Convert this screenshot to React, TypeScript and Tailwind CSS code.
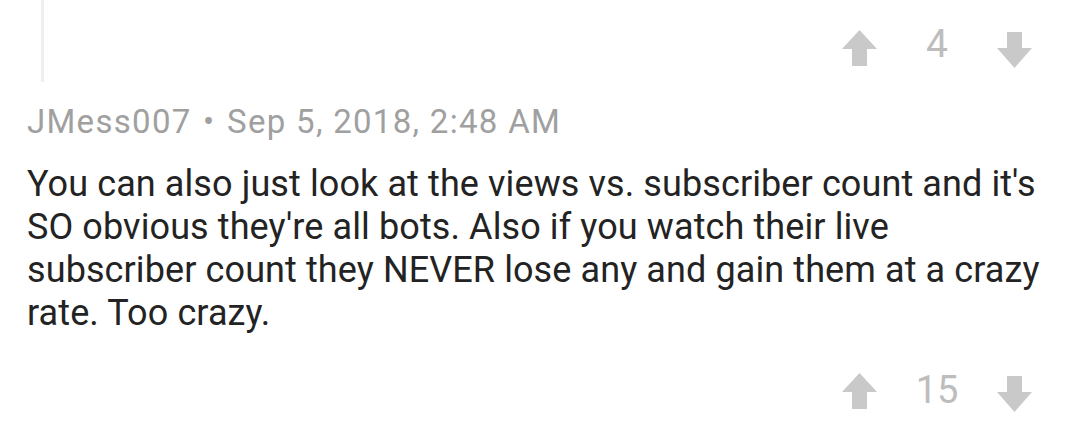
import React from 'react';

function UpArrow() {
  return (
    <svg width="35" height="36" viewBox="0 0 35 36" className="block">
      <polygon points="17.5,0 35,19 25,19 25,36 10,36 10,19 0,19" fill="#c9c9c9" />
    </svg>
  );
}

function DownArrow() {
  return (
    <svg width="35" height="36" viewBox="0 0 35 36" className="block">
      <polygon points="10,0 25,0 25,16 35,16 17.5,36 0,16 10,16" fill="#c9c9c9" />
    </svg>
  );
}

function Votes({ count, low }: { count: number; low?: boolean }) {
  return (
    <div className="flex items-start">
      <UpArrow />
      <div
        className={
          low
            ? 'w-[120px] -mt-[2px] text-center text-[38px] leading-[38px] text-[#bdbdbd]'
            : 'w-[120px] -mt-[5px] text-center text-[39px] leading-[39px] text-[#bdbdbd]'
        }
      >
        {count}
      </div>
      <div className={low ? 'mt-[3px]' : 'mt-[2px]'}>
        <DownArrow />
      </div>
    </div>
  );
}

export default function App() {
  return (
    <div className="w-[1080px] h-[421px] bg-white overflow-hidden font-['Roboto',sans-serif]">
      <div className="flex h-[90px]">
        <div className="ml-[41px] w-[3px] h-[82px] bg-[#efefef]" />
        <div className="ml-auto mr-[48px] pt-[30px]">
          <Votes count={4} />
        </div>
      </div>
      <div className="pl-[27px] pr-[30px]">
        <div className="mt-[12px] text-[33px] leading-[40px] tracking-[1.3px] text-[#a0a0a0]">
          JMess007 <span className="mx-[2px]">•</span> Sep 5, 2018, 2:48 AM
        </div>
        <p className="mt-[21px] text-[36px] leading-[43px] tracking-[0.1px] text-[#232323]">
          You can also just look at the views vs. subscriber count and it's SO obvious they're all bots. Also if you watch their live subscriber count they NEVER lose any and gain them at a crazy rate. Too crazy.
        </p>
      </div>
      <div className="flex justify-end mr-[48px] mt-[38px]">
        <Votes count={15} low />
      </div>
    </div>
  );
}
